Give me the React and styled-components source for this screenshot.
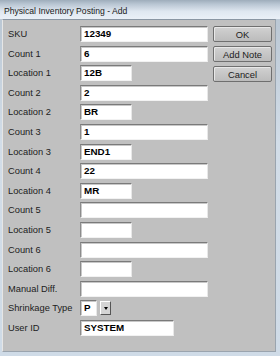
import React from 'react';
import styled, { createGlobalStyle } from 'styled-components';

const GlobalStyle = createGlobalStyle`
    html, body {
        margin: 0;
        padding: 0;
        width: 280px;
        height: 356px;
        overflow: hidden;
        background: #b4c6d8;
    }
    * {
        box-sizing: border-box;
    }
`;

const Window = styled.div`
    width: 280px;
    height: 356px;
    display: flex;
    flex-direction: column;
    background: linear-gradient(180deg, #b7c4d1 0%, #d2dde8 40%, #cfdbe7 100%);
    padding: 0 4px 4px 2px;
    font-family: 'Liberation Sans', Arial, sans-serif;
`;

const TitleBar = styled.div`
    height: 19px;
    display: flex;
    align-items: flex-end;
    padding: 0 0 3px 1px;
    margin-left: -2px;
    margin-right: -4px;
    background: linear-gradient(180deg, #9eadbb 0%, #b9c6d3 22%, #dfe7f0 60%, #eaf0f7 100%);
`;

const Title = styled.span`
    font-size: 8.6px;
    color: #1a1a1a;
    padding-left: 3px;
`;

const Body = styled.div`
    flex: 1;
    display: flex;
    background: #c0c0c0;
    border-top: 1px solid #8a96a3;
    border-left: 1px solid #e6e6e6;
    border-right: 1px solid #9aa4ae;
    border-bottom: 1px solid #9aa4ae;
    padding: 6px 0 0 5px;
`;

const Form = styled.div`
    display: grid;
    grid-template-columns: 72px 128px;
    grid-auto-rows: 19.6px;
    align-items: start;
`;

const Label = styled.div`
    font-size: 9.3px;
    color: #202020;
    line-height: 16px;
`;

const Field = styled.div`
    width: ${(p) => p.$w}px;
    height: 16px;
    background: #ffffff;
    border-top: 1px solid #7a7a7a;
    border-left: 1px solid #8c8c8c;
    border-right: 1px solid #e8e8e8;
    border-bottom: 1px solid #f2f2f2;
    box-shadow: inset 1px 1px 0 #c8c8c8;
    font-size: 9.8px;
    font-weight: bold;
    color: #000;
    line-height: 14px;
    padding-left: 3px;
    white-space: nowrap;
    overflow: hidden;
`;

const Combo = styled.div`
    display: flex;
    gap: 3px;
    height: 16px;
`;

const DropButton = styled.div`
    width: 11px;
    height: 14px;
    margin-top: 1px;
    background: #d4d4d4;
    border-top: 1px solid #ffffff;
    border-left: 1px solid #ffffff;
    border-right: 1px solid #555;
    border-bottom: 1px solid #555;
    display: flex;
    align-items: center;
    justify-content: center;
`;

const Arrow = styled.span`
    width: 0;
    height: 0;
    border-left: 2.5px solid transparent;
    border-right: 2.5px solid transparent;
    border-top: 3px solid #000;
`;

const Buttons = styled.div`
    display: flex;
    flex-direction: column;
    gap: 4px;
    margin-left: 5px;
`;

const Button = styled.div`
    width: 59px;
    height: 16px;
    border: 1px solid #6f6f6f;
    border-radius: 2px;
    background: linear-gradient(180deg, #d2d2d2 0%, #c6c6c6 50%, #bcbcbc 100%);
    box-shadow: inset 1px 1px 0 #e8e8e8;
    font-size: 9.4px;
    color: #1c1c1c;
    display: flex;
    align-items: center;
    justify-content: center;
`;

const rows = [
    { label: 'SKU', value: '12349', w: 128 },
    { label: 'Count 1', value: '6', w: 128 },
    { label: 'Location 1', value: '12B', w: 52 },
    { label: 'Count 2', value: '2', w: 128 },
    { label: 'Location 2', value: 'BR', w: 52 },
    { label: 'Count 3', value: '1', w: 128 },
    { label: 'Location 3', value: 'END1', w: 52 },
    { label: 'Count 4', value: '22', w: 128 },
    { label: 'Location 4', value: 'MR', w: 52 },
    { label: 'Count 5', value: '', w: 128 },
    { label: 'Location 5', value: '', w: 52 },
    { label: 'Count 6', value: '', w: 128 },
    { label: 'Location 6', value: '', w: 52 },
    { label: 'Manual Diff.', value: '', w: 128 },
];

export default function App() {
    return (
        <Window>
            <GlobalStyle />
            <TitleBar>
                <Title>Physical Inventory Posting - Add</Title>
            </TitleBar>
            <Body>
                <Form>
                    {rows.map((r) => (
                        <React.Fragment key={r.label}>
                            <Label>{r.label}</Label>
                            <Field $w={r.w}>{r.value}</Field>
                        </React.Fragment>
                    ))}
                    <Label>Shrinkage Type</Label>
                    <Combo>
                        <Field $w={17}>P</Field>
                        <DropButton>
                            <Arrow />
                        </DropButton>
                    </Combo>
                    <Label>User ID</Label>
                    <Field $w={94}>SYSTEM</Field>
                </Form>
                <Buttons>
                    <Button>OK</Button>
                    <Button>Add Note</Button>
                    <Button>Cancel</Button>
                </Buttons>
            </Body>
        </Window>
    );
}
